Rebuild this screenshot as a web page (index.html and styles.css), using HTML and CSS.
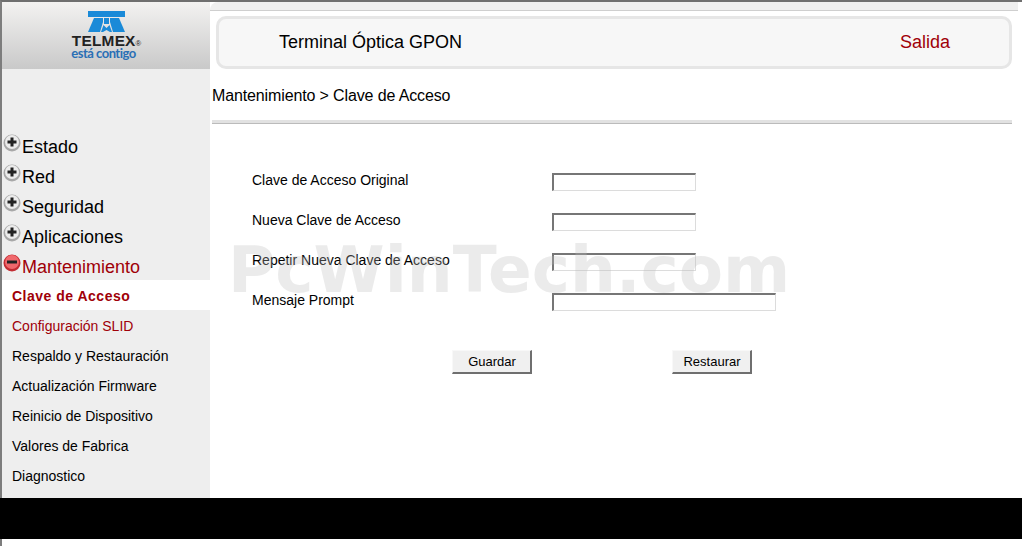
FILE: index.html
```html
<!DOCTYPE html>
<html lang="es">
<head>
    <meta charset="UTF-8">
    <title>Terminal Óptica GPON</title>
    <link rel="stylesheet" href="styles.css">
</head>
<body>
    <div class="frame">
        <aside class="sidebar">
            <div class="logo">
                <svg class="logo-mark" width="37" height="21" viewBox="0 0 37 21">
                    <path fill="#1a8ad8" d="M0 0H37V6H0Z"/>
                    <path fill="#1a8ad8" d="M6 7H15V11L12 21H0Z"/>
                    <path fill="#1a8ad8" d="M22 7H31L37 21H25L22 11Z"/>
                    <path fill="#1a8ad8" d="M16 7H21V13H16Z"/>
                    <path fill="#1a8ad8" d="M15.500 14L18.500 17L21.500 14L24 21H22L18.500 19L15 21H13Z"/>
                </svg>
                <div class="logo-name">TELMEX<span class="logo-reg">®</span></div>
                <div class="logo-slogan">está contigo</div>
            </div>
            <ul class="menu">
                <li class="menu-item">
                    <svg class="toggle" width="18" height="18" viewBox="0 0 18 18"><circle cx="9" cy="9" r="8.500" fill="#a8a8a8"/><circle cx="9" cy="8" r="7" fill="#ececec"/><path fill="#222" d="M7.500 3.500H10.500V6.500H13.500V9.500H10.500V12.500H7.500V9.500H4.500V6.500H7.500Z"/></svg>
                    Estado
                </li>
                <li class="menu-item">
                    <svg class="toggle" width="18" height="18" viewBox="0 0 18 18"><circle cx="9" cy="9" r="8.500" fill="#a8a8a8"/><circle cx="9" cy="8" r="7" fill="#ececec"/><path fill="#222" d="M7.500 3.500H10.500V6.500H13.500V9.500H10.500V12.500H7.500V9.500H4.500V6.500H7.500Z"/></svg>
                    Red
                </li>
                <li class="menu-item">
                    <svg class="toggle" width="18" height="18" viewBox="0 0 18 18"><circle cx="9" cy="9" r="8.500" fill="#a8a8a8"/><circle cx="9" cy="8" r="7" fill="#ececec"/><path fill="#222" d="M7.500 3.500H10.500V6.500H13.500V9.500H10.500V12.500H7.500V9.500H4.500V6.500H7.500Z"/></svg>
                    Seguridad
                </li>
                <li class="menu-item">
                    <svg class="toggle" width="18" height="18" viewBox="0 0 18 18"><circle cx="9" cy="9" r="8.500" fill="#a8a8a8"/><circle cx="9" cy="8" r="7" fill="#ececec"/><path fill="#222" d="M7.500 3.500H10.500V6.500H13.500V9.500H10.500V12.500H7.500V9.500H4.500V6.500H7.500Z"/></svg>
                    Aplicaciones
                </li>
                <li class="menu-item open">
                    <svg class="toggle" width="18" height="18" viewBox="0 0 18 18"><circle cx="9" cy="9" r="8.500" fill="#c22c32"/><circle cx="9" cy="8" r="7" fill="#f0686c"/><rect x="4" y="6.500" width="10" height="3" fill="#222"/></svg>
                    Mantenimiento
                </li>
                <li class="sub-item current">Clave de Acceso</li>
                <li class="sub-item visited">Configuración SLID</li>
                <li class="sub-item">Respaldo y Restauración</li>
                <li class="sub-item">Actualización Firmware</li>
                <li class="sub-item">Reinicio de Dispositivo</li>
                <li class="sub-item">Valores de Fabrica</li>
                <li class="sub-item">Diagnostico</li>
            </ul>
        </aside>

        <main class="content">
            <div class="panel">
                <header class="topbar">
                    <span class="topbar-title">Terminal Óptica GPON</span>
                    <span class="topbar-exit">Salida</span>
                </header>
                <h1 class="breadcrumb">Mantenimiento &gt; Clave de Acceso</h1>
                <form class="form">
                    <label class="form-label">Clave de Acceso Original</label>
                    <input class="field" type="password">
                    <label class="form-label">Nueva Clave de Acceso</label>
                    <input class="field" type="password">
                    <label class="form-label">Repetir Nueva Clave de Acceso</label>
                    <input class="field" type="password">
                    <label class="form-label">Mensaje Prompt</label>
                    <input class="field field-wide" type="text">
                    <div class="form-actions">
                        <button class="btn" type="button">Guardar</button>
                        <button class="btn" type="button">Restaurar</button>
                    </div>
                </form>
            </div>
        </main>
    </div>
    <div class="black-bar"></div>
    <div class="page-end"></div>
    <div class="watermark">PcWinTech.com</div>
</body>
</html>
```

FILE: styles.css
```css
html, body {
    margin: 0;
    padding: 0;
    height: 546px;
    overflow: hidden;
    background-color: #fff;
    font-family: "Liberation Sans", Arial, sans-serif;
    color: #000;
}

.frame {
    display: flex;
    height: 496px;
    border-top: 2px solid #6f6f6f;
    border-left: 2px solid #7d7d7d;
}

/* Left column */
.sidebar {
    width: 208px;
    flex-shrink: 0;
    background-color: #eee;
}

.logo {
    height: 67px;
    box-sizing: border-box;
    padding-top: 9px;
    display: flex;
    flex-direction: column;
    align-items: center;
    background: linear-gradient(#f3f2f1, #c9c9c9);
}

.logo-mark {
    display: block;
    margin-left: 1px;
}

.logo-name {
    font-size: 14px;
    line-height: 12px;
    font-weight: bold;
    color: #222;
    letter-spacing: 0.2px;
    margin-top: 3px;
    margin-left: 2px;
    transform: scaleX(1.1);
}

.logo-reg {
    font-size: 7px;
    font-weight: normal;
}

.logo-slogan {
    font-family: Lato, sans-serif;
    font-size: 13px;
    line-height: 11px;
    font-weight: bold;
    color: #2a6fb5;
    letter-spacing: -0.5px;
    margin-top: -2px;
    margin-right: 5px;
}

.menu {
    list-style: none;
    margin: 61px 0 0;
    padding: 0;
}

.menu-item {
    height: 30px;
    box-sizing: border-box;
    padding-top: 6px;
    display: flex;
    gap: 1px;
    align-items: flex-start;
    font-size: 18px;
    line-height: 22px;
    margin-left: 1px;
}

.menu-item.open {
    color: #a00008;
}

.toggle {
    flex-shrink: 0;
    margin-top: -2px;
}

.sub-item {
    height: 30px;
    line-height: 32px;
    padding-left: 10px;
    font-size: 14px;
}

.sub-item.current {
    background-color: #fff;
    color: #a00008;
    font-weight: bold;
    letter-spacing: 0.5px;
}

.sub-item.visited {
    color: #a00008;
}

/* Right column */
.content {
    flex: 1;
    padding-right: 4px;
    background-color: #fff;
}

.panel {
    height: 100%;
    box-sizing: border-box;
    padding-top: 6px;
    border-top: 8px solid #efefef;
    box-shadow: inset 0 1px 0 #cfcfcf;
    border-radius: 8px 0 0 0;
    background-color: #fff;
}

.topbar {
    height: 53px;
    box-sizing: border-box;
    margin: 0 6px;
    display: flex;
    justify-content: space-between;
    align-items: center;
    padding: 0 59px 0 60px;
    border: 3px solid #e6e6e6;
    border-radius: 10px;
    background-color: #f7f7f7;
    font-size: 18px;
}

.topbar-exit {
    color: #a00008;
}

.breadcrumb {
    height: 54px;
    box-sizing: border-box;
    margin: 0 6px 0 2px;
    padding-top: 17px;
    border-bottom: 3px solid #e2e2e2;
    box-shadow: 0 1px 0 #bbb;
    font-size: 16px;
    line-height: 20px;
    font-weight: normal;
    letter-spacing: -0.13px;
}

.form {
    display: grid;
    grid-template-columns: 300px 1fr;
    grid-auto-rows: 40px;
    align-items: start;
    padding: 49px 0 0 42px;
}

.form-label {
    font-size: 14px;
    line-height: 16px;
}

.field {
    width: 144px;
    height: 18px;
    box-sizing: border-box;
    margin: 1px 0 0;
    padding: 0;
    background-color: transparent;
    border-style: solid;
    border-width: 2px 1px 1px 2px;
    border-color: #767676 #dcdcdc #dcdcdc #767676;
    outline: none;
}

.field-wide {
    width: 224px;
}

.form-actions {
    grid-column: 1 / -1;
    display: flex;
    gap: 140px;
    padding: 18px 0 0 200px;
}

.btn {
    width: 80px;
    height: 24px;
    padding: 0 0 0 1px;
    background-color: #f0f0f0;
    font-family: "Liberation Sans", Arial, sans-serif;
    font-size: 13px;
    color: #000;
    border-style: solid;
    border-width: 1px 2px 2px 1px;
    border-color: #f8f8f8 #6f6f6f #6f6f6f #f8f8f8;
}

/* Bottom of the page */
.black-bar {
    height: 41px;
    background-color: #000;
}

.page-end {
    height: 7px;
    border-left: 2px solid #7d7d7d;
}

/* Site watermark lying over the form */
.watermark {
    position: absolute;
    left: 228px;
    top: 232px;
    font-family: "DejaVu Sans", sans-serif;
    font-size: 64.500px;
    line-height: 76px;
    font-weight: bold;
    color: rgba(190, 190, 190, 0.3);
    pointer-events: none;
}
```
